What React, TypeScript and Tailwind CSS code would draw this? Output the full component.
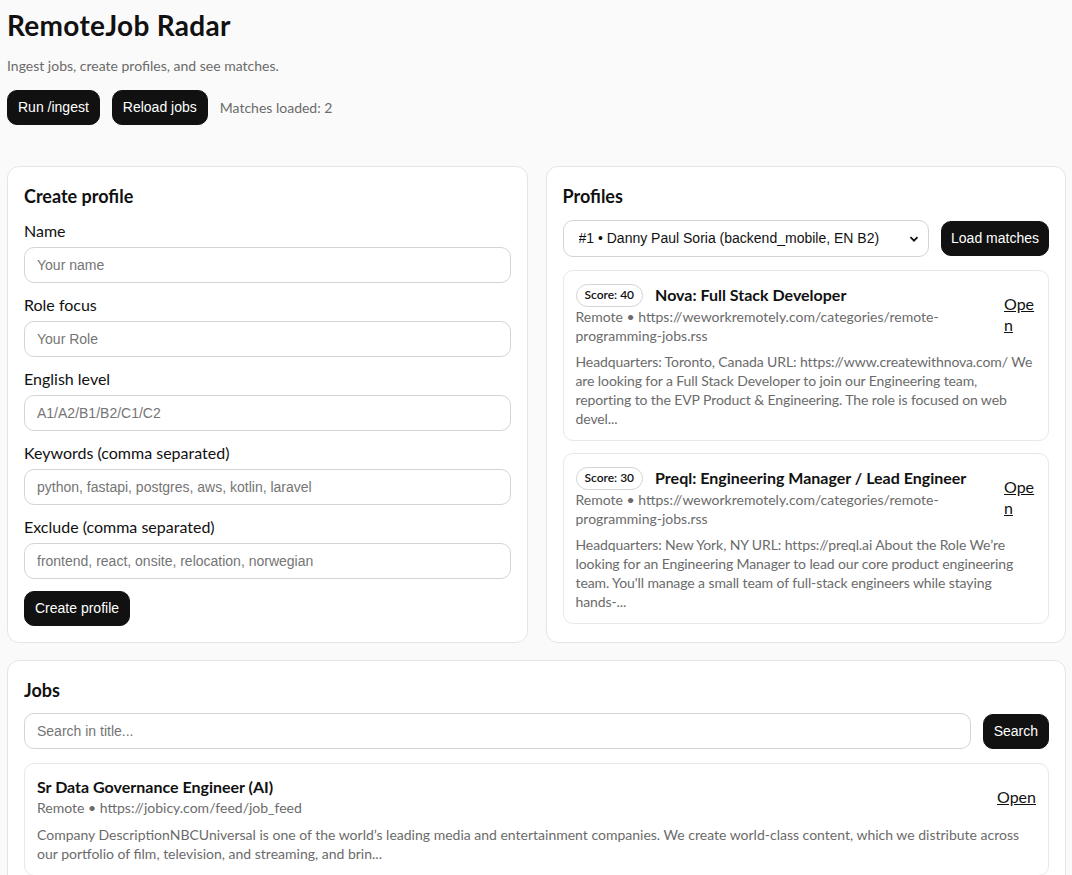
const matches = [
  {
    score: 40,
    title: "Nova: Full Stack Developer",
    source: "https://weworkremotely.com/categories/remote-programming-jobs.rss",
    description:
      "Headquarters: Toronto, Canada URL: https://www.createwithnova.com/ We are looking for a Full Stack Developer to join our Engineering team, reporting to the EVP Product & Engineering. The role is focused on web devel...",
  },
  {
    score: 30,
    title: "Preql: Engineering Manager / Lead Engineer",
    source: "https://weworkremotely.com/categories/remote-programming-jobs.rss",
    description:
      "Headquarters: New York, NY URL: https://preql.ai About the Role We’re looking for an Engineering Manager to lead our core product engineering team. You'll manage a small team of full-stack engineers while staying hands-...",
  },
];

const fields = [
  { label: "Name", placeholder: "Your name" },
  { label: "Role focus", placeholder: "Your Role" },
  { label: "English level", placeholder: "A1/A2/B1/B2/C1/C2" },
  { label: "Keywords (comma separated)", placeholder: "python, fastapi, postgres, aws, kotlin, laravel" },
  { label: "Exclude (comma separated)", placeholder: "frontend, react, onsite, relocation, norwegian" },
];

const btn =
  "h-[35px] px-[10px] rounded-[10px] bg-[#111111] border border-[#111111] text-white text-[14px] font-['Liberation_Sans',Arial,sans-serif] whitespace-nowrap";
const input =
  "w-full h-[36px] px-3 rounded-[10px] border border-[#d4d4d4] bg-white text-[14px] font-['Liberation_Sans',Arial,sans-serif] placeholder:text-[#757575] outline-none";

const App = () => {
  return (
    <div className="min-h-screen bg-[#fafafa] text-[#111111] font-['Segoe_UI',Lato,sans-serif] pl-[7px] pr-[6px] pt-2 pb-4">
      <h1 className="text-[28px] leading-[34px] font-bold tracking-[0.3px]">RemoteJob Radar</h1>
      <p className="mt-[14px] text-[14px] leading-[20px] text-[#6b6b6b]">
        Ingest jobs, create profiles, and see matches.
      </p>
      <div className="mt-[14px] flex items-center gap-3">
        <button className={btn}>Run /ingest</button>
        <button className={btn}>Reload jobs</button>
        <span className="text-[14px] text-[#6b6b6b]">Matches loaded: 2</span>
      </div>

      <div className="mt-[41px] grid grid-cols-2 gap-[18px]">
        <div className="bg-white border border-[#e5e5e5] rounded-[12px] p-4 flex flex-col gap-[10px]">
          <h2 className="text-[18px] leading-[26px] font-bold">Create profile</h2>
          {fields.map((f) => (
            <label key={f.label} className="flex flex-col gap-1">
              <span className="text-[16px] leading-[24px]">{f.label}</span>
              <input className={input} placeholder={f.placeholder} />
            </label>
          ))}
          <div className="pt-[2px]">
            <button className={btn}>Create profile</button>
          </div>
        </div>

        <div className="bg-white border border-[#e5e5e5] rounded-[12px] p-4 flex flex-col">
          <h2 className="text-[18px] leading-[26px] font-bold">Profiles</h2>
          <div className="mt-[11px] flex items-center gap-3">
            <div className="relative flex-1">
              <select className="w-full h-[37px] pl-[15px] pr-8 appearance-none rounded-[10px] border border-[#d4d4d4] bg-white text-[14px] font-['Liberation_Sans',Arial,sans-serif] text-[#111111] outline-none">
                <option>#1 • Danny Paul Soria (backend_mobile, EN B2)</option>
              </select>
              <svg
                className="absolute right-[10px] top-1/2 -translate-y-1/2 pointer-events-none"
                width="10"
                height="10"
                viewBox="0 0 10 10"
              >
                <path d="M1.5 3.2 L5 6.7 L8.5 3.2" fill="none" stroke="#111" strokeWidth="1.8" />
              </svg>
            </div>
            <button className="h-[35px] px-[9px] rounded-[10px] bg-[#111111] border border-[#111111] text-white text-[14px] font-['Liberation_Sans',Arial,sans-serif] whitespace-nowrap">
              Load matches
            </button>
          </div>
          <div className="mt-[13px] flex flex-col gap-3">
            {matches.map((m) => (
              <div key={m.title} className="border border-[#e8e8e8] rounded-[10px] p-3">
                <div className="flex items-center gap-3">
                  <div className="flex-1 min-w-0">
                    <div className="h-[24px] flex items-center gap-3">
                      <span className="px-2 h-[23px] flex items-center rounded-full border border-[#d4d4d4] text-[12px] font-semibold whitespace-nowrap">
                        Score: {m.score}
                      </span>
                      <span className="text-[16px] leading-[22px] font-bold">{m.title}</span>
                    </div>
                    <div className="text-[14px] leading-[19px] text-[#6b6b6b] pr-[50px]">
                      Remote • {m.source}
                    </div>
                  </div>
                  <a href="#" className="w-[32px] break-all text-[16px] leading-[21px] underline">
                    Open
                  </a>
                </div>
                <p className="mt-[7px] text-[14px] leading-[19px] text-[#6b6b6b] tracking-[-0.1px]">{m.description}</p>
              </div>
            ))}
          </div>
        </div>
      </div>

      <div className="mt-[17px] bg-white border border-[#e5e5e5] rounded-[12px] p-4">
        <h2 className="text-[18px] leading-[26px] font-bold">Jobs</h2>
        <div className="mt-[10px] flex items-center gap-3">
          <input className={input} placeholder="Search in title..." />
          <button className={btn}>Search</button>
        </div>
        <div className="mt-[14px] border border-[#e8e8e8] rounded-[10px] p-3">
          <div className="flex items-center gap-3">
            <div className="flex-1">
              <div className="text-[16px] leading-[22px] font-bold">Sr Data Governance Engineer (AI)</div>
              <div className="text-[14px] leading-[19px] text-[#6b6b6b]">Remote • https://jobicy.com/feed/job_feed</div>
            </div>
            <a href="#" className="text-[16px] underline">
              Open
            </a>
          </div>
          <p className="mt-2 text-[14px] leading-[19px] text-[#6b6b6b]">
            Company DescriptionNBCUniversal is one of the world’s leading media and entertainment companies. We create
            world-class content, which we distribute across our portfolio of film, television, and streaming, and
            brin...
          </p>
        </div>
      </div>
    </div>
  );
};

export default App;
